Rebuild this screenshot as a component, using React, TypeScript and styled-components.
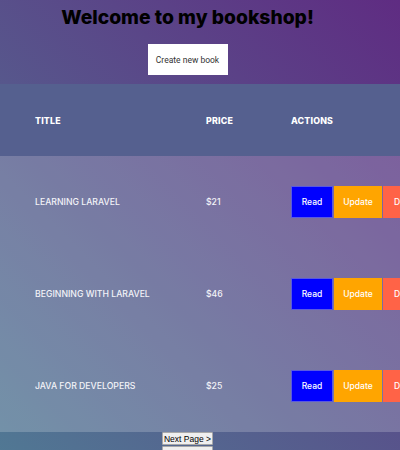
import React from "react";
import styled, { createGlobalStyle } from "styled-components";

const GlobalStyle = createGlobalStyle`
  html, body {
    margin: 0;
    padding: 0;
    overflow: hidden;
  }
  body {
    min-height: 900px;
    background: linear-gradient(45deg, #49a09d, #5f2c82);
    font-family: "Poppins", "Inter", "Noto Sans", sans-serif;
  }
`;

const Page = styled.div`
  width: 400px;
  min-height: 900px;
`;

const Header = styled.header`
  width: 375px;
  display: flex;
  flex-direction: column;
  align-items: center;
  height: 84px;
`;

const Title = styled.h1`
  margin: 0;
  font-family: "Inter", sans-serif;
  font-weight: 800;
  font-size: 19.3px;
  line-height: 34px;
  color: #000;
`;

const CreateButton = styled.button`
  margin-top: 10px;
  width: 80px;
  height: 31px;
  background: #fff;
  border: none;
  font-family: "Roboto", "Liberation Sans", sans-serif;
  font-size: 8.5px;
  color: #333;
  padding: 0;
`;

const Table = styled.table`
  border-collapse: collapse;
  table-layout: fixed;
  width: 560px;
`;

const Th = styled.th`
  text-align: left;
  padding: 30px 0 30px 35px;
  height: 12px;
  background-color: #55608f;
  color: #fff;
  font-family: "Inter", sans-serif;
  font-weight: 800;
  font-size: 8.8px;
  letter-spacing: 0.2px;
  text-transform: uppercase;
`;

const Td = styled.td`
  padding: 30px 0 30px 35px;
  height: 32px;
  background-color: rgba(255, 255, 255, 0.2);
  color: #f3f3f8;
  font-family: "Inter", sans-serif;
  font-weight: 500;
  font-size: 8.7px;
  text-transform: uppercase;
  white-space: nowrap;
  vertical-align: middle;
`;

const Actions = styled.div`
  display: flex;
  gap: 1px;
`;

const ActionButton = styled.button<{ $bg: string; $border: string; $w: number }>`
  width: ${(p) => p.$w}px;
  height: 32px;
  background: ${(p) => p.$bg};
  border: 1px solid ${(p) => p.$border};
  color: #fff;
  font-family: "Inter", sans-serif;
  font-weight: 500;
  font-size: 8.5px;
  padding: 0;
  flex-shrink: 0;
`;

const Pager = styled.div`
  width: 375px;
  display: flex;
  flex-direction: column;
  align-items: center;
  gap: 1px;
`;

const PageButton = styled.button`
  font-family: "Liberation Sans", Arial, sans-serif;
  font-size: 8.5px;
  line-height: 10px;
  padding: 0;
  height: 13px;
  width: 51px;
  background: #efefef;
  color: #000;
  border: 1px solid #a8a8a8;
  border-radius: 1px;
  white-space: nowrap;
`;

const books = [
  { title: "Learning Laravel", price: "$21" },
  { title: "Beginning with Laravel", price: "$46" },
  { title: "Java for developers", price: "$25" },
];

export default function App() {
  return (
    <Page>
      <GlobalStyle />
      <Header>
        <Title>Welcome to my bookshop!</Title>
        <CreateButton>Create new book</CreateButton>
      </Header>
      <Table>
        <colgroup>
          <col style={{ width: 171 }} />
          <col style={{ width: 85 }} />
          <col />
        </colgroup>
        <thead>
          <tr>
            <Th>Title</Th>
            <Th>Price</Th>
            <Th>Actions</Th>
          </tr>
        </thead>
        <tbody>
          {books.map((b) => (
            <tr key={b.title}>
              <Td>{b.title}</Td>
              <Td>{b.price}</Td>
              <Td>
                <Actions>
                  <ActionButton $bg="#0000ff" $border="#5a5ae0" $w={42}>Read</ActionButton>
                  <ActionButton $bg="#ffa500" $border="#ffa500" $w={48}>Update</ActionButton>
                  <ActionButton $bg="#ff6347" $border="#ff6347" $w={48}>Delete</ActionButton>
                </Actions>
              </Td>
            </tr>
          ))}
        </tbody>
      </Table>
      <Pager>
        <PageButton>Next Page &gt;</PageButton>
        <PageButton>&lt; Prev Page</PageButton>
      </Pager>
    </Page>
  );
}
